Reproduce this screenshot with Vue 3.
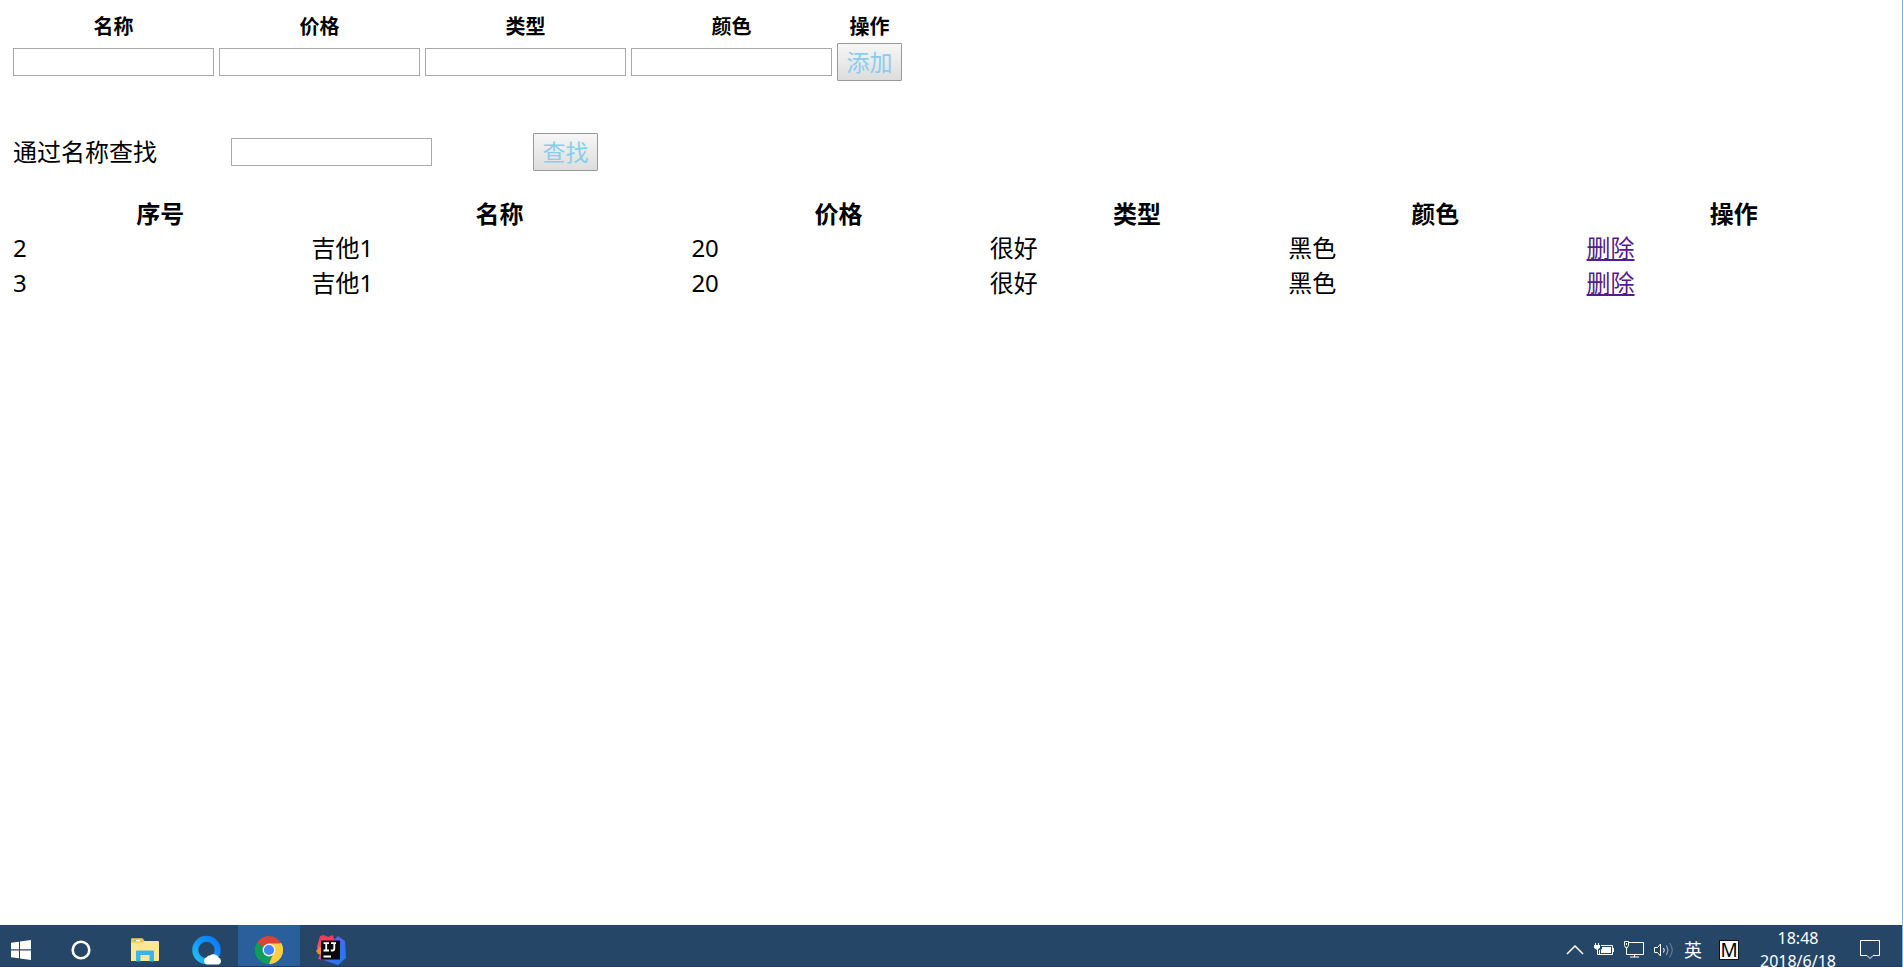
<script setup>
import { ref } from 'vue'

const fields = ['名称', '价格', '类型', '颜色']
const columns = ['序号', '名称', '价格', '类型', '颜色', '操作']
const form = ref(['', '', '', ''])
const keyword = ref('')
const rows = ref([
  { id: 2, name: '吉他1', price: 20, type: '很好', color: '黑色' },
  { id: 3, name: '吉他1', price: 20, type: '很好', color: '黑色' }
])
</script>

<template>
  <div class="screen">
    <main class="page">
      <table class="add-table">
        <thead>
          <tr>
            <th v-for="(f, i) in fields" :key="f"><label :for="'field-' + i">{{ f }}</label></th>
            <th>操作</th>
          </tr>
        </thead>
        <tbody>
          <tr>
            <td v-for="(f, i) in fields" :key="f">
              <input :id="'field-' + i" v-model="form[i]" class="box" type="text">
            </td>
            <td><button class="btn" type="button">添加</button></td>
          </tr>
        </tbody>
      </table>

      <form class="search" @submit.prevent>
        <label for="keyword" class="search-label">通过名称查找</label>
        <input id="keyword" v-model="keyword" class="box search-box" type="text">
        <button class="btn" type="submit">查找</button>
      </form>

      <table class="list">
        <colgroup>
          <col v-for="c in columns" :key="c" :class="{ wide: c === '名称' }">
        </colgroup>
        <thead>
          <tr><th v-for="c in columns" :key="c">{{ c }}</th></tr>
        </thead>
        <tbody>
          <tr v-for="r in rows" :key="r.id">
            <td>{{ r.id }}</td>
            <td>{{ r.name }}</td>
            <td>{{ r.price }}</td>
            <td>{{ r.type }}</td>
            <td>{{ r.color }}</td>
            <td><a href="#">删除</a></td>
          </tr>
        </tbody>
      </table>
    </main>

    <footer class="taskbar">
      <div class="apps">
        <button class="app start" type="button" aria-label="开始">
          <svg width="20" height="20" viewBox="0 0 20 20" fill="#fff">
            <path d="M0 2.8 8 1.7V9.2H0zM9 1.5 20 0V9.2H9zM0 10.4H8V18.2L0 17.2zM9 10.4H20V20L9 18.5z" />
          </svg>
        </button>
        <button class="app cortana" type="button" aria-label="Cortana">
          <svg width="20" height="20" viewBox="0 0 20 20">
            <circle cx="10" cy="10" r="8.3" fill="none" stroke="#fff" stroke-width="2.6" />
          </svg>
        </button>
        <button class="app" type="button" aria-label="文件资源管理器">
          <svg width="28" height="24" viewBox="0 0 28 24">
            <path d="M0 1.5Q0 .5 1 .5H11.5L13.5 3H27Q28 3 28 4V22Q28 23 27 23H0z" fill="#ffe694" />
            <path d="M0 5V1.5Q0 .5 1 .5H11.5L13.5 3 12 4.5H0z" fill="#fbc62f" />
            <path d="M3 1.8H9V3.4H3z" fill="#fff" />
            <path d="M3 1.8H5V3.4H3z" fill="#6cc5c0" />
            <path d="M5 23.5V13.5Q5 12.5 6 12.5H22Q23 12.5 23 13.5V23.5H18.5V17H9.5V23.5z" fill="#3bb4e8" />
          </svg>
        </button>
        <button class="app" type="button" aria-label="QQ浏览器">
          <svg width="30" height="30" viewBox="0 0 30 30">
            <defs>
              <linearGradient id="qq" x1="0" y1="1" x2="1" y2="0">
                <stop offset="0" stop-color="#22c4f5" />
                <stop offset=".5" stop-color="#1595fb" />
                <stop offset="1" stop-color="#0a79f5" />
              </linearGradient>
            </defs>
            <circle cx="14.5" cy="15" r="11.2" fill="none" stroke="url(#qq)" stroke-width="6" />
            <path d="M15 29.500a3.800 3.800 0 0 1-.3-7.300 3 3 0 0 1 3.300-1.700 5.800 5.800 0 0 1 8.600 2 3.900 3.900 0 0 1 .4 7z" fill="#fff" />
          </svg>
        </button>
        <button class="app active" type="button" aria-label="Chrome">
          <svg width="28" height="28" viewBox="0 0 28 28">
            <path d="M14 14 1.9 7A14 14 0 0 1 26.1 7z" fill="#db4437" />
            <path d="M14 14 26.1 7A14 14 0 0 1 14 28z" fill="#ffcd40" />
            <path d="M14 14 14 28A14 14 0 0 1 1.9 7z" fill="#0f9d58" />
            <path d="M14 7.6H26.4A14 14 0 0 1 14 28L19.6 17z" fill="#ffcd40" />
            <path d="M1.9 7 8.5 17.2 14 20.3 18 18.2 14 28A14 14 0 0 1 1.9 7z" fill="#0f9d58" />
            <circle cx="14" cy="14" r="6.4" fill="#f1f1f1" />
            <circle cx="14" cy="14" r="5.1" fill="#4285f4" />
          </svg>
        </button>
        <button class="app" type="button" aria-label="IntelliJ IDEA">
          <svg width="30" height="30" viewBox="0 0 30 30">
            <defs>
              <linearGradient id="ijr" x1="0" y1="0" x2="0" y2="1">
                <stop offset="0" stop-color="#fe315d" />
                <stop offset=".5" stop-color="#f0506a" />
                <stop offset="1" stop-color="#c246a0" />
              </linearGradient>
              <linearGradient id="ijb" x1="0" y1="0" x2="1" y2="1">
                <stop offset="0" stop-color="#a24ec8" />
                <stop offset=".5" stop-color="#3b6ef0" />
                <stop offset="1" stop-color="#1d7bf0" />
              </linearGradient>
            </defs>
            <path d="M4 1 8 0 12 2 17 0 19 8 12 26 2 24 4 19 1 12z" fill="url(#ijr)" />
            <path d="M0 16 4 11 7 20 2 19z" fill="#f98a2c" />
            <path d="M17 6 22 1 29 6 30 23 22 30 10 26z" fill="url(#ijb)" />
            <rect x="5" y="5.500" width="19" height="19" fill="#090909" />
            <path d="M7.500 8.200H13M10.200 8.200V15.500M7.500 15.500H13M15 8.200H20M18.300 8.200V13.500Q18.300 15.500 16.500 15.500H14.800M7.500 21.500H15" fill="none" stroke="#fff" stroke-width="1.800" />
          </svg>
        </button>
      </div>

      <div class="tray">
        <svg width="18" height="10" viewBox="0 0 18 10" fill="none" stroke="#fff" stroke-width="1.5">
          <path d="M1 9 9 1 17 9" />
        </svg>
        <svg width="20" height="14" viewBox="0 0 20 14">
          <path d="M1.500 0V3M4.500 0V3M3.500 6V11.500H6" fill="none" stroke="#fff" />
          <path d="M0 2H6V4.500L4 6.500H2L0 4.500z" fill="#fff" />
          <path d="M7 2.500H18.500V11.500H5.500V7" fill="none" stroke="#fff" />
          <path d="M8 4H17V10H7V6.500L8 6z" fill="#fff" />
          <path d="M19 5H20V9H19z" fill="#fff" />
        </svg>
        <svg width="20" height="17" viewBox="0 0 20 17" fill="none" stroke="#fff">
          <path d="M5 1.500H19.500V13.500H2.500V7M10.500 14V16M6 16H15" />
          <path d="M.5 .5H4.500V4.500L3.500 6.500H1.500L.5 4.500zM2.500 2V4" />
        </svg>
        <svg width="20" height="16" viewBox="0 0 20 16" fill="none" stroke="#fff">
          <path d="M.5 5.500H3.500L6.500 2V14L3.500 10.500H.5z" />
          <path d="M9.500 6Q11 8 9.500 10.500" />
          <path d="M12.500 3.500Q15.500 8 12.500 13" opacity=".6" />
          <path d="M15.500 1Q21 8 15.500 15.500" opacity=".35" />
        </svg>
        <span class="lang">英</span>
        <span class="ime">M</span>
        <time class="clock" datetime="2018-06-18T18:48"><span>18:48</span><span>2018/6/18</span></time>
        <svg class="note" width="20" height="20" viewBox="0 0 20 20" fill="none" stroke="#fff">
          <path d="M.5 .5H19.500V15.500H13L10 18.500 7 15.500H.5z" />
        </svg>
      </div>
    </footer>
  </div>
</template>

<style>
body {
  background: #fff;
}
</style>

<style scoped>
.screen {
  display: flex;
  flex-direction: column;
  box-sizing: border-box;
  height: 100vh;
  overflow: hidden;
  border-right: 1px solid #7eb4ea;
  color: #000;
  font-family: "Noto Sans", "Noto Sans CJK SC", sans-serif;
  font-size: 24px;
  line-height: 32px;
}

.page {
  flex: 1;
  min-height: 0;
  padding: 10px 17px 0 13px;
}

table {
  border-collapse: collapse;
}

th,
td {
  padding: 0;
}

.add-table th {
  padding: 1px 5px 0 0;
  font-size: 20px;
  line-height: 32px;
}

.add-table td {
  height: 38px;
  padding-right: 5px;
  vertical-align: middle;
}

.add-table th:last-child,
.add-table td:last-child {
  padding-right: 0;
}

.box {
  display: block;
  box-sizing: border-box;
  width: 201px;
  height: 28px;
  padding: 2px;
  border: 1px solid #a9a9a9;
  background: #fff;
  font: inherit;
  font-size: 16px;
}

.btn {
  display: block;
  box-sizing: border-box;
  width: 65px;
  height: 38px;
  padding: 0;
  border: 1px solid #999;
  border-radius: 1px;
  background: linear-gradient(#f6f6f6, #dddddd);
  color: #87ceeb;
  font: inherit;
  font-size: 23px;
  line-height: 36px;
}

.search {
  display: flex;
  align-items: center;
  margin-top: 52px;
}

.search-label {
  width: 218px;
}

.search-box {
  margin-right: 101px;
}

.list {
  width: 100%;
  margin-top: 26px;
  table-layout: fixed;
}

.list .wide {
  width: 380px;
}

.list th,
.list td {
  height: 35px;
  padding-right: 4px;
}

.list th {
  height: 33px;
}

.list td {
  text-align: left;
}

a {
  color: #551a8b;
}

.taskbar {
  display: flex;
  flex: none;
  justify-content: space-between;
  box-sizing: border-box;
  height: 42px;
  border-bottom: 1px solid #1b3c60;
  background: #264668;
  color: #fff;
}

.apps {
  display: flex;
}

.app {
  display: flex;
  align-items: center;
  justify-content: center;
  width: 62px;
  height: 49px;
  padding: 0;
  border: 0;
  background: none;
}

.app.start {
  width: 50px;
  padding-right: 8px;
}

.app.cortana {
  width: 64px;
  padding-right: 2px;
}

.app.active {
  height: 41px;
  padding-top: 8px;
  box-sizing: border-box;
  background: #29609b;
}

.tray {
  display: flex;
  align-items: center;
  gap: 10px;
  height: 49px;
  padding-right: 22px;
}

.lang {
  font-size: 18px;
}

.ime {
  display: flex;
  align-items: center;
  justify-content: center;
  box-sizing: border-box;
  width: 20px;
  height: 20px;
  margin: 0 11px 0 7px;
  border: 1px solid #111;
  background: #fff;
  color: #000;
  font-size: 19px;
}

.clock {
  display: flex;
  flex-direction: column;
  width: 76px;
  font-size: 16px;
  line-height: 23px;
  text-align: center;
}

.note {
  margin-left: 14px;
}
</style>
